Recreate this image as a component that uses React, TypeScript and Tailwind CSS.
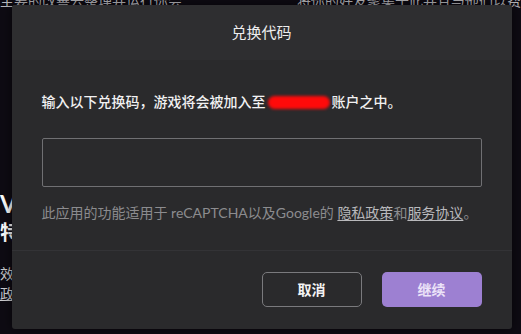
const cjk = "font-['Lato','Noto_Sans_CJK_SC',sans-serif]"

function Backdrop() {
  return (
    <div className="flex h-[334px] w-[521px] flex-col justify-between overflow-hidden bg-[#0e0b13] pb-[30px] text-[#cfcfd2]">
      <div className="-mt-[7px] flex justify-between text-[14px] leading-[16px] text-[#b9b9bd]">
        <span>主要的改善去整理并运行你会</span>
        <span>将你的好友聚集于此并且与他们以费</span>
      </div>
      <div className="flex flex-col">
        <span className="text-[24px] leading-[28px] font-bold text-white">Vi</span>
        <span className="text-[20px] leading-[28px] font-bold text-white">特</span>
        <span className="mt-[18px] text-[14px] leading-[20px]">效果</span>
        <span className="text-[14px] leading-[20px] underline">政策</span>
      </div>
    </div>
  )
}

export default function App() {
  return (
    <div className={`relative h-[334px] w-[521px] overflow-hidden ${cjk}`}>
      <Backdrop />
      <div className="absolute inset-0 flex items-center justify-center">
        <div className="ml-[2px] flex h-[324px] w-[500px] flex-col overflow-hidden rounded-[3px] bg-[#2a2a2c] shadow-[0_0_12px_rgba(0,0,0,0.6)]">
          <div className="flex h-[55px] shrink-0 items-center justify-center bg-[#2e2e30] text-[15px] text-[#ededee]">
            兑换代码
          </div>
          <div className="flex flex-col px-[30px] pt-[32px] pb-[27px]">
            <p className="flex items-center text-[14px] leading-[20px] font-medium text-[#f1f1f2]">
              输入以下兑换码，游戏将会被加入至
              <span className="mx-[2px] inline-block h-[13px] w-[62px] rounded-full bg-[#ff0a0a] blur-[1.5px]" />
              账户之中。
            </p>
            <input
              className="mt-[26px] h-[49px] w-full rounded-[2px] border border-[#707073] bg-[#2a2a2c] px-3 text-[14px] text-white outline-none"
              type="text"
            />
            <p className="mt-[16px] text-[14px] leading-[20px] text-[#8c8c8f]">
              此应用的功能适用于 reCAPTCHA以及Google的{' '}
              <a className="text-[#b9b9bc] underline underline-offset-2">隐私政策</a>和
              <a className="text-[#b9b9bc] underline underline-offset-2">服务协议</a>。
            </p>
          </div>
          <div className="flex flex-1 items-start justify-end gap-[20px] border-t border-[#333336] px-[30px] pt-[21px]">
            <button className="h-[35px] w-[100px] rounded-[5px] border border-[#7a7a7d] text-[14px] font-bold text-[#f4f4f4]">
              取消
            </button>
            <button className="h-[35px] w-[100px] rounded-[5px] bg-[#9d80d2] text-[14px] font-bold text-[#ece3f8]">
              继续
            </button>
          </div>
        </div>
      </div>
    </div>
  )
}
